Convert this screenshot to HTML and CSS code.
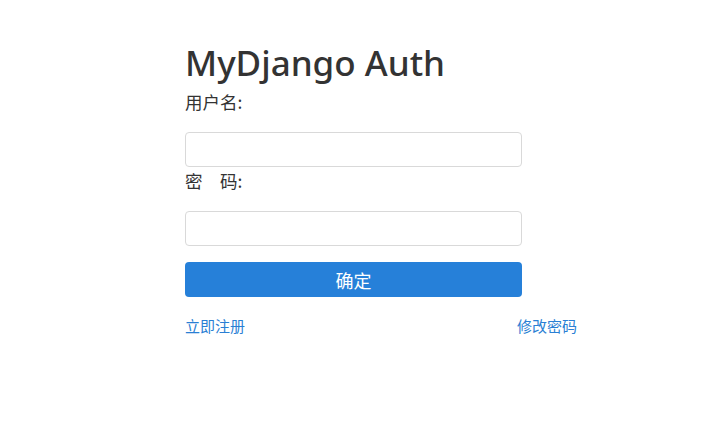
FILE: index.html
```html
<!DOCTYPE html>
<html lang="zh">
<head>
<meta charset="utf-8">
<title>MyDjango Auth</title>
<link rel="stylesheet" href="styles.css">
</head>
<body>
<div class="wrap">
  <form class="form">
    <h1 class="title">MyDjango Auth</h1>
    <label class="label">用户名:</label>
    <input class="field" type="text">
    <label class="label">密&emsp;码:</label>
    <input class="field" type="password">
    <button class="btn" type="button">确定</button>
    <div class="links">
      <a class="link" href="#">立即注册</a>
      <a class="link" href="#">修改密码</a>
    </div>
  </form>
</div>
</body>
</html>
```
FILE: styles.css
```css
html, body {
  margin: 0;
  padding: 0;
  background: #fff;
}
body {
  font-family: "Noto Sans", "Noto Sans CJK SC", sans-serif;
  color: #333;
}
.wrap {
  padding: 38px 0 0 185px;
}
.form {
  width: 392px;
  display: flex;
  flex-direction: column;
  align-items: flex-start;
}
.title {
  margin: 0;
  font-size: 35px;
  font-weight: 500;
  line-height: 50px;
  color: #333;
}
.label {
  font-family: "Noto Sans CJK SC", sans-serif;
  font-size: 17.5px;
  line-height: 24px;
  margin-top: 2px;
  margin-bottom: 18px;
}
.field {
  box-sizing: border-box;
  width: 337px;
  height: 35px;
  margin: 0;
  border: 1px solid #d9d9d9;
  border-radius: 4px;
  background: #fff;
  font-size: 14px;
}
.btn {
  margin-top: 16px;
  width: 337px;
  height: 35px;
  border: none;
  border-radius: 4px;
  background: #2680d9;
  color: #fff;
  font-family: "Noto Sans CJK SC", sans-serif;
  font-size: 18px;
  cursor: pointer;
}
.links {
  margin-top: 19px;
  width: 100%;
  display: flex;
  justify-content: space-between;
}
.link {
  font-family: "Noto Sans CJK SC", sans-serif;
  font-size: 15px;
  line-height: 20px;
  color: #2a7fd4;
  text-decoration: none;
}
```
